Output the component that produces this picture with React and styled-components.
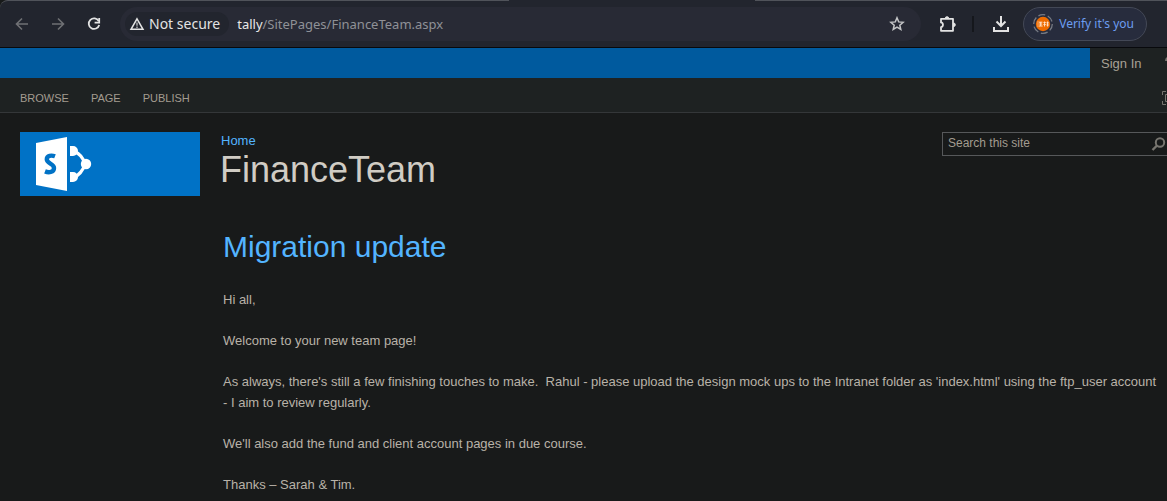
import React from 'react';
import styled, { createGlobalStyle } from 'styled-components';

const Global = createGlobalStyle`
  *, *::before, *::after { box-sizing: border-box; }
  html { background: #181a1a; }
  body {
    margin: 0;
    min-height: 100vh;
    overflow: hidden;
    background: #181a1a;
    color: #b8b2a8;
    font: 13px/21px "Liberation Sans", Arial, sans-serif;
  }
  button, input { font: inherit; color: inherit; }
  a { text-decoration: none; color: inherit; }
  h1, h2, p { margin: 0; font-weight: 400; }
  svg { display: block; flex: none; }
`;

const BrowserBar = styled.header`
  position: relative;
  display: flex;
  align-items: center;
  height: 48px;
  padding: 0 20px 0 14px;
  background: #22252e;
  border-top: 1px solid #50535a;
  border-bottom: 1px solid #08090c;
  border-top-left-radius: 8px;
  font-family: "Noto Sans", sans-serif;
`;

const ActiveTabGap = styled.span`
  position: absolute;
  top: -1px;
  left: 509px;
  width: 246px;
  height: 1px;
  background: #22252e;
`;

const IconButton = styled.button`
  display: grid;
  place-items: center;
  flex: none;
  width: 16px;
  height: 34px;
  margin-right: ${(p) => p.$gap || 0}px;
  padding: 0;
  border: 0;
  background: none;
  color: ${(p) => (p.$dim ? '#6f7074' : '#e3e3e3')};
`;

const AddressBar = styled.form`
  display: flex;
  align-items: center;
  flex: 1;
  min-width: 0;
  height: 34px;
  margin-right: 18px;
  padding: 0 16px 0 5px;
  border-radius: 17px;
  background: #282a35;
`;

const SecurityChip = styled.button`
  display: flex;
  align-items: center;
  gap: 4px;
  flex: none;
  height: 24px;
  margin-right: 8px;
  padding: 0 9px 0 4px;
  border: 0;
  border-radius: 12px;
  background: #22252e;
  color: #e3e3e3;
  font-size: 14px;
  line-height: 20px;
`;

const Address = styled.a`
  flex: 1;
  min-width: 0;
  overflow: hidden;
  white-space: nowrap;
  color: #8f9197;
  font-size: 13px;
  line-height: 20px;
`;

const Host = styled.span`
  color: #e8e8e8;
`;

const Divider = styled.span`
  width: 2px;
  height: 16px;
  margin-right: 19px;
  background: #15171c;
`;

const ProfileButton = styled.button`
  display: flex;
  align-items: center;
  gap: 5px;
  flex: none;
  height: 34px;
  padding: 0 12px 0 8px;
  border: 1px solid #434856;
  border-radius: 17px;
  background: #272c3d;
  color: #6c9df0;
  font-size: 12px;
  line-height: 18px;
  white-space: nowrap;
`;

const SuiteBar = styled.div`
  display: flex;
  height: 30px;
  background: #1e2222;
`;

const SuiteFill = styled.div`
  flex: 1;
  background: #005a9e;
`;

const SuiteActions = styled.div`
  display: flex;
  align-items: center;
  justify-content: space-between;
  width: 77px;
  padding-left: 11px;
  white-space: nowrap;
  color: #a8a196;
`;

const HelpButton = styled.button`
  flex: none;
  width: 2px;
  padding: 0;
  overflow: hidden;
  border: 0;
  background: none;
  color: #77756f;
`;

const Ribbon = styled.nav`
  display: flex;
  align-items: center;
  gap: 22px;
  height: 35px;
  padding: 5px 0 0 20px;
  overflow: hidden;
  border-bottom: 1px solid #343739;
  background: #1e2222;
  color: #a39c90;
  font-size: 11px;
  line-height: 16px;
`;

const FocusButton = styled(HelpButton)`
  width: 5px;
  margin-left: auto;
`;

const SiteHeader = styled.header`
  display: flex;
  align-items: flex-start;
  padding: 19px 0 0 20px;
`;

const Logo = styled.a`
  flex: none;
  width: 180px;
  height: 64px;
  margin-right: 20px;
  background: #0072c6;
`;

const TitleBlock = styled.div`
  flex: 1;
`;

const Breadcrumb = styled.a`
  display: block;
  padding-left: 1px;
  color: #53b4ff;
  line-height: 18px;
`;

const SiteTitle = styled.h1`
  color: #d0ccc4;
  font-size: 36px;
  line-height: 40px;
`;

const SearchBox = styled.form`
  display: flex;
  align-items: center;
  width: 225px;
  height: 24px;
  padding-left: 5px;
  border: 1px solid #56585a;
  border-right: 0;
`;

const SearchInput = styled.input`
  flex: 1;
  min-width: 0;
  height: 22px;
  padding: 0 0 2px;
  border: 0;
  outline: 0;
  background: none;
  font-size: 12px;
  &::placeholder { color: #a39c90; opacity: 1; }
`;

const SearchButton = styled(IconButton)`
  height: 22px;
  color: #77756f;
`;

const Article = styled.main`
  display: flex;
  flex-direction: column;
  gap: 20px;
  padding: 29px 8px 0 223px;
`;

const ArticleTitle = styled.h2`
  color: #53b4ff;
  font-size: 30px;
  line-height: 44px;
`;

const Paragraph = styled.p`
  white-space: pre-wrap;
`;

const Arrow = ({ flip }) => (
  <svg width="16" height="16" viewBox="0 0 16 16" fill="none" stroke="currentColor" strokeWidth="1.6" transform={flip ? 'rotate(180)' : undefined}>
    <path d="M14 8H3M8 2.5 2.5 8 8 13.5" />
  </svg>
);

const Reload = () => (
  <svg width="16" height="16" viewBox="0 0 16 16" fill="none" stroke="currentColor" strokeWidth="1.8">
    <path d="M12.7 5A5.3 5.3 0 1 0 13.2 9" />
    <path d="M13.2 2v4.6H8.6" />
  </svg>
);

const Warning = () => (
  <svg width="16" height="16" viewBox="0 0 16 16" fill="none" stroke="currentColor" strokeWidth="1.5">
    <path d="M8 2.8 14 13.3H2Z" />
    <path d="M8 6.5v3.3M8 10.6v1.4" strokeOpacity=".7" />
  </svg>
);

const Star = () => (
  <svg width="16" height="16" viewBox="0 0 16 16" fill="none" stroke="#c4c5c7" strokeWidth="1.5">
    <path d="m8 1.8 1.7 4.1 4.4.4-3.3 2.9 1 4.3L8 11.2l-3.8 2.3 1-4.3-3.3-2.9 4.4-.4Z" />
  </svg>
);

const Puzzle = () => (
  <svg width="18" height="18" viewBox="0 0 18 18" fill="none" stroke="currentColor" strokeWidth="1.8" strokeLinejoin="round">
    <path d="M2 3.8H14V15.8H2V12.2C4.6 12 4.6 7.6 2 7.4Z" />
    <path d="M6.2 3.5a1.8 1.8 0 0 1 3.6 0ZM14.5 8a1.8 1.8 0 0 1 0 3.6Z" fill="currentColor" strokeWidth="1" />
  </svg>
);

const Download = () => (
  <svg width="16" height="18" viewBox="0 0 16 18" fill="none" stroke="currentColor" strokeWidth="2">
    <path d="M8 1v9.5M3.5 6.5 8 11l4.5-4.5M1 12v4h14v-4" />
  </svg>
);

const Avatar = () => (
  <svg width="22" height="22" viewBox="0 0 22 22">
    <circle cx="11" cy="11" r="9.3" fill="none" stroke="#777b84" strokeWidth="1.3" strokeDasharray="7 2.7" />
    <circle cx="11" cy="11" r="7.2" fill="#ef6c00" />
    <path d="M5.5 9h1M5.5 11h1M5.5 13h1M7 9.2h3.4M7.2 11h3M7 13h3.6M8.7 9v4M11.5 9.5h2.2M11.5 11.5h2.2M12.6 8.5v5M14.5 9.8h2.2M14.5 12h2.2M15.6 8.5v5" stroke="#ffe3cc" strokeWidth="1" />
  </svg>
);

const Help = () => (
  <svg width="10" height="16" viewBox="0 0 10 16" fill="none" stroke="currentColor" strokeWidth="2">
    <path d="M1 6C1 1 9 1 9 5C9 8 5 7 5 11M5 13v2" />
  </svg>
);

const Focus = () => (
  <svg width="15" height="14" viewBox="0 0 15 14" fill="none" stroke="currentColor">
    <path d="M4 .5H.5V4M.5 10v3.5H4M11 .5h3.5V4M14.5 10v3.5H11M3.5 3.5h8v7h-8Z" />
  </svg>
);

const Magnifier = () => (
  <svg width="16" height="16" viewBox="0 0 16 16" fill="none" stroke="currentColor" strokeWidth="2">
    <circle cx="9" cy="6.5" r="4.2" />
    <path d="M6 9.5 1.5 14" strokeWidth="2.4" />
  </svg>
);

const SharePointMark = () => (
  <svg width="72" height="64" viewBox="0 0 72 64">
    <path d="M16 11 47 5V59L16 53Z" fill="#fff" />
    <path d="M35 24.3C31.5 23 26.8 23.4 26.8 27.3C26.8 31.8 34 31.4 34 36C34 40.6 28.5 40.8 25 39.4" fill="none" stroke="#0072c6" strokeWidth="4.4" />
    <path d="M53 19Q62 22 65 32Q62 42 53 46" fill="none" stroke="#fff" strokeWidth="3.2" />
    <path d="M50 14h3a5 5 0 0 1 0 10h-3ZM50 40h3a5 5 0 0 1 0 10h-3Z" fill="#fff" />
    <circle cx="66" cy="32" r="5.2" fill="#fff" />
  </svg>
);

const paragraphs = [
  'Hi all,',
  'Welcome to your new team page!',
  "As always, there's still a few finishing touches to make.  Rahul - please upload the design mock ups to the Intranet folder as 'index.html' using the ftp_user account - I aim to review regularly.",
  "We'll also add the fund and client account pages in due course.",
  'Thanks – Sarah & Tim.',
];

export default function App() {
  return (
    <>
      <Global />
      <BrowserBar>
        <ActiveTabGap />
        <IconButton $dim $gap={20} aria-label="Back"><Arrow /></IconButton>
        <IconButton $dim $gap={20} aria-label="Forward"><Arrow flip /></IconButton>
        <IconButton $gap={18} aria-label="Reload"><Reload /></IconButton>
        <AddressBar>
          <SecurityChip type="button"><Warning />Not secure</SecurityChip>
          <Address href="#address"><Host>tally</Host>/SitePages/FinanceTeam.aspx</Address>
          <IconButton type="button" aria-label="Bookmark this page"><Star /></IconButton>
        </AddressBar>
        <IconButton $gap={17} aria-label="Extensions"><Puzzle /></IconButton>
        <Divider />
        <IconButton $gap={14} aria-label="Downloads"><Download /></IconButton>
        <ProfileButton><Avatar />Verify it's you</ProfileButton>
      </BrowserBar>
      <SuiteBar>
        <SuiteFill />
        <SuiteActions>
          <a href="#sign-in">Sign In</a>
          <HelpButton aria-label="Help"><Help /></HelpButton>
        </SuiteActions>
      </SuiteBar>
      <Ribbon>
        <a href="#browse">BROWSE</a>
        <a href="#page">PAGE</a>
        <a href="#publish">PUBLISH</a>
        <FocusButton aria-label="Focus on content"><Focus /></FocusButton>
      </Ribbon>
      <SiteHeader>
        <Logo href="#site" aria-label="SharePoint"><SharePointMark /></Logo>
        <TitleBlock>
          <Breadcrumb href="#home">Home</Breadcrumb>
          <SiteTitle>FinanceTeam</SiteTitle>
        </TitleBlock>
        <SearchBox role="search">
          <SearchInput aria-label="Search this site" placeholder="Search this site" />
          <SearchButton type="button" aria-label="Search"><Magnifier /></SearchButton>
        </SearchBox>
      </SiteHeader>
      <Article>
        <ArticleTitle>Migration update</ArticleTitle>
        {paragraphs.map((text) => <Paragraph key={text}>{text}</Paragraph>)}
      </Article>
    </>
  );
}
